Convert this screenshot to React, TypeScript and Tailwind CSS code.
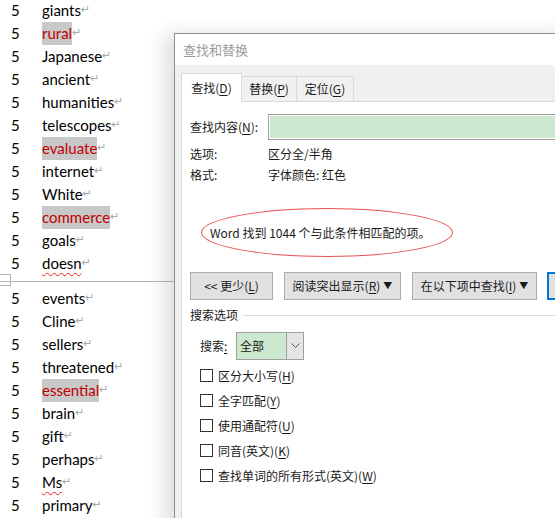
import React from 'react';

type Word = { text: string; hit?: boolean; typo?: boolean };

const pageOne: Word[] = [
  { text: 'giants' },
  { text: 'rural', hit: true },
  { text: 'Japanese' },
  { text: 'ancient' },
  { text: 'humanities' },
  { text: 'telescopes' },
  { text: 'evaluate', hit: true },
  { text: 'internet' },
  { text: 'White' },
  { text: 'commerce', hit: true },
  { text: 'goals' },
  { text: 'doesn', typo: true },
];

const pageTwo: Word[] = [
  { text: 'events' },
  { text: 'Cline' },
  { text: 'sellers' },
  { text: 'threatened' },
  { text: 'essential', hit: true },
  { text: 'brain' },
  { text: 'gift' },
  { text: 'perhaps' },
  { text: 'Ms', typo: true },
  { text: 'primary' },
];

const cjk = { fontFamily: '"Noto Sans CJK SC", "Noto Sans", sans-serif' };

function DocRow({ w }: { w: Word }) {
  return (
    <div className="flex h-[23px] items-center">
      <span className="w-[42px] pl-[11px] text-[15px] text-black">5</span>
      <span
        className={`flex h-[23px] items-center text-[15px] ${w.hit ? 'bg-[#c8c8c8] text-[#c00000]' : 'text-black'} ${
          w.typo ? 'underline decoration-wavy decoration-[#e02020] decoration-1 underline-offset-[3px]' : ''
        }`}
      >
        {w.text}
      </span>
      <span className="text-[11px] text-[#a8a8a8]" style={{ fontFamily: '"DejaVu Sans", sans-serif' }}>
        ↵
      </span>
    </div>
  );
}

function Mn({ children }: { children: React.ReactNode }) {
  return <u className="underline-offset-[2px]">{children}</u>;
}

function Check({ label }: { label: React.ReactNode }) {
  return (
    <div className="flex h-[25px] items-center">
      <span className="h-[13px] w-[13px] border border-[#333] bg-white" />
      <span className="ml-[5px]">{label}</span>
    </div>
  );
}

function Dialog() {
  return (
    <div
      className="absolute left-[174px] top-[33px] h-[500px] w-[400px] border-l border-t border-[#8f8f8f] bg-[#f0f0f0] text-[12px] text-[#1a1a1a] shadow-[-10px_0_18px_rgba(0,0,0,0.12)]"
      style={cjk}
    >
      <div className="flex h-[31px] items-center bg-white pl-[8px] text-[13px] text-[#9b9b9b]">查找和替换</div>
      <div className="pl-[6px] pt-[9px]">
        <div className="flex h-[28px] items-end">
          <div className="relative z-10 flex h-[29px] w-[61px] items-center justify-center border border-b-0 border-[#d9d9d9] bg-white">
            查找(<Mn>D</Mn>)
          </div>
          <div className="flex h-[26px] w-[55px] items-center justify-center border border-l-0 border-[#d9d9d9]">
            替换(<Mn>P</Mn>)
          </div>
          <div className="flex h-[26px] w-[57px] items-center justify-center border border-l-0 border-[#d9d9d9]">
            定位(<Mn>G</Mn>)
          </div>
        </div>
        <div className="-mt-px h-[420px] border border-[#d9d9d9] bg-white pl-[8px] pt-[12px]">
          <div className="flex h-[26px] items-center">
            <span className="w-[78px]">
              查找内容(<Mn>N</Mn>):
            </span>
            <div className="h-[26px] flex-1 border border-[#a0a0a0] bg-white p-[1px]">
              <div className="h-full w-full bg-[#cce8cf]" />
            </div>
          </div>
          <div className="mt-[3px] flex h-[21px] items-center">
            <span className="w-[78px]">选项:</span>
            <span>区分全/半角</span>
          </div>
          <div className="flex h-[21px] items-center">
            <span className="w-[78px]">格式:</span>
            <span>字体颜色: 红色</span>
          </div>
          <div className="ml-[11px] mt-[23px] flex h-[49px] w-[252px] items-center rounded-[50%] border border-[#e85050] pl-[8px]">
            Word 找到 1044 个与此条件相匹配的项。
          </div>
          <div className="mt-[15px] flex h-[28px] items-center">
            <div className="flex h-[28px] w-[83px] shrink-0 items-center justify-center border border-[#adadad] bg-[#e1e1e1]">
              &lt;&lt; 更少(<Mn>L</Mn>)
            </div>
            <div className="ml-[11px] flex h-[28px] w-[117px] shrink-0 items-center justify-center border border-[#adadad] bg-[#e1e1e1]">
              阅读突出显示(<Mn>R</Mn>)<span className="ml-[3px] text-[9px]">▼</span>
            </div>
            <div className="ml-[11px] flex h-[28px] w-[125px] shrink-0 items-center justify-center border border-[#adadad] bg-[#e1e1e1]">
              在以下项中查找(<Mn>I</Mn>)<span className="ml-[3px] text-[9px]">▼</span>
            </div>
            <div className="ml-[10px] h-[28px] w-[40px] shrink-0 border-2 border-[#0078d7] bg-[#e1e1e1]" />
          </div>
          <div className="mt-[5px] flex h-[20px] items-center">
            <span>搜索选项</span>
            <div className="ml-[5px] h-px flex-1 bg-[#dcdcdc]" />
          </div>
          <div className="ml-[10px] mt-[7px]">
            <div className="flex h-[28px] items-center">
              <span className="w-[36px]">
                搜索<Mn>:</Mn>
              </span>
              <div className="flex h-[28px] w-[68px] border border-[#a0a0a0] bg-[#cce8cf]">
                <span className="flex flex-1 items-center pl-[3px]">全部</span>
                <span className="flex w-[17px] items-center justify-center border-l border-[#a0a0a0] bg-[#e5e5e5]">
                  <svg width="9" height="6" viewBox="0 0 9 6">
                    <path d="M0.5 0.5 L4.5 4.5 L8.5 0.5" fill="none" stroke="#555" strokeWidth="1" />
                  </svg>
                </span>
              </div>
            </div>
            <div className="mt-[3px]">
              <Check label={<>区分大小写(<Mn>H</Mn>)</>} />
              <Check label={<>全字匹配(<Mn>Y</Mn>)</>} />
              <Check label={<>使用通配符(<Mn>U</Mn>)</>} />
              <Check label={<>同音(英文)(<Mn>K</Mn>)</>} />
              <Check label={<>查找单词的所有形式(英文)(<Mn>W</Mn>)</>} />
            </div>
          </div>
        </div>
      </div>
    </div>
  );
}

export default function App() {
  return (
    <div className="relative h-[518px] w-[555px] overflow-hidden bg-white" style={{ fontFamily: 'Lato, "Noto Sans", sans-serif' }}>
      <div className="-mt-[1px]">
        {pageOne.map((w) => (
          <DocRow key={w.text} w={w} />
        ))}
        <div className="relative h-[12px]">
          <div className="absolute left-0 top-[-1px] h-[12px] w-[11px] border border-[#b5b5b5] border-l-0" />
          <div className="absolute left-0 top-[6px] h-px w-[174px] bg-[#b5b5b5]" />
        </div>
        {pageTwo.map((w) => (
          <DocRow key={w.text} w={w} />
        ))}
      </div>
      <Dialog />
    </div>
  );
}
